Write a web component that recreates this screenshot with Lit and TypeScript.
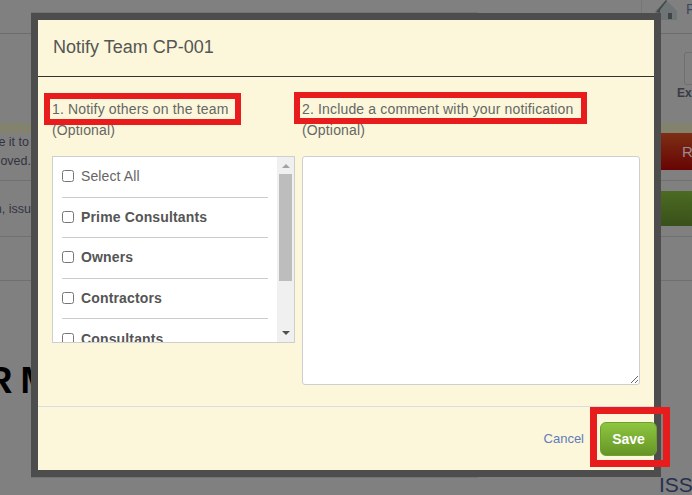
import { LitElement, html, css } from "lit";
import { customElement } from "lit/decorators.js";

const groups = [
  { name: "Select All", bold: false },
  { name: "Prime Consultants", bold: true },
  { name: "Owners", bold: true },
  { name: "Contractors", bold: true },
  { name: "Consultants", bold: true },
];

@customElement("app-root")
export class AppRoot extends LitElement {
  static styles = css`
    :host { display: block; width: 692px; height: 495px; font-family: "Liberation Sans", Arial, sans-serif; }
    * { box-sizing: border-box; }
    .page { position: relative; width: 692px; height: 495px; overflow: hidden; background: #808080; color: #3a3a44; display: flex; flex-direction: column; }

    /* dimmed page behind the dialog */
    .bar { height: 34px; flex: none; border-bottom: 1px solid #6c6c6c; display: flex; justify-content: flex-end; }
    .home { width: 51px; border-left: 1px solid #767676; display: flex; gap: 9px; padding: 0 0 0 13px; font-size: 14px; color: #3c4660; line-height: 18px; }
    .home svg { flex: none; }
    .tools { height: 89px; flex: none; display: flex; justify-content: flex-end; padding-top: 18px; gap: 19px; }
    .tool { display: flex; flex-direction: column; align-items: flex-start; gap: 2px; font-size: 12px; font-weight: bold; line-height: 13px; width: 15px; }
    .tool-l { width: 10px; }
    .tool i { display: block; width: 30px; height: 33px; border: 1px solid #6f6f6f; border-radius: 3px; flex: none; }
    .tool-l i { margin-left: -27px; }
    .tool-r { margin-right: -7px; width: 15px; }
    .tool span { white-space: nowrap; }
    .tool-r span { margin-left: -7px; }
    .row { flex: none; border-bottom: 1px solid #6f6f6f; display: flex; justify-content: space-between; }
    .note { height: 58px; background: linear-gradient(#83836d 0 10px, #808080 10px); font-size: 12.5px; line-height: 19px; color: #33333f; }
    .note p { margin: 10px 0 0; width: 31px; overflow: hidden; display: flex; flex-direction: column; align-items: flex-end; white-space: nowrap; }
    .note p span:first-child { margin-right: 2px; }
    .red { width: 31px; height: 37px; margin-top: 10px; background: linear-gradient(#7c2f14, #680404); color: #9a8a96; font-size: 15px; line-height: 37px; padding-left: 21px; overflow: hidden; }
    .issue { height: 56px; font-size: 12.5px; line-height: 16px; color: #33333f; }
    .issue span { display: flex; justify-content: flex-end; width: 31px; overflow: hidden; white-space: nowrap; margin-top: 20px; height: 16px; }
    .green { width: 31px; height: 35px; margin-top: 10px; background: linear-gradient(#4c6b22, #39501a); }
    .plain { height: 44px; }
    .title { flex: 1; display: flex; justify-content: space-between; }
    .title b { font-size: 36px; line-height: 40px; word-spacing: -2px; color: #000; margin: 80px 0 0 -13.5px; white-space: nowrap; height: 40px; }
    .title span { font-size: 21px; line-height: 22px; color: #27304f; margin-top: 193px; width: 33px; white-space: nowrap; overflow: hidden; }
    .edge { position: absolute; left: 31px; top: 12px; width: 447px; height: 466px; background: #737373; }

    /* dialog */
    .modal { position: absolute; left: 31px; top: 13px; width: 630px; height: 464px; border: 7px solid #4d4d4d; background: #fcf7da; display: flex; flex-direction: column; }
    .head { height: 57px; flex: none; border-bottom: 1px solid #333; padding: 16px 15px 0; font-size: 18px; line-height: 22px; color: #555; }
    .body { flex: 1; display: grid; grid-template-columns: 243px 338px; column-gap: 7px; padding: 20px 0 0 14px; align-content: start; }
    .label { font-size: 14px; line-height: 21px; letter-spacing: .16px; color: #666; height: 59px; padding: 2px 0 0; white-space: nowrap; }
    .list { height: 187px; border: 1px solid #ccced0; background: #fff; display: flex; overflow: hidden; }
    .items { flex: 1; min-width: 0; padding: 0 9px; overflow: hidden; }
    .item { height: 40.6px; width: 206px; flex: none; border-bottom: 1px solid #ccc; display: flex; align-items: center; gap: 6px; font-size: 14px; letter-spacing: .1px; color: #666; }
    .item:first-child { padding-bottom: 2px; }
    .item:last-child { border-bottom: 0; }
    .item.bold { font-weight: bold; color: #555; letter-spacing: .15px; padding-bottom: 1px; }
    .item input { width: 12px; height: 12px; margin: 0 1px 0 0; flex: none; }
    .sb { width: 17px; flex: none; background: #f0f0f0; display: flex; flex-direction: column; align-items: center; padding: 7px 0 7px; }
    .sb .th { width: 13px; height: 107px; background: #bdbdbd; margin-top: 6px; flex: none; }
    .sb .up { width: 0; height: 0; border: 4px solid transparent; border-top: 0; border-bottom: 4px solid #a3a3a3; flex: none; }
    .sb .dn { width: 0; height: 0; border: 4px solid transparent; border-bottom: 0; border-top: 4px solid #505050; margin-top: auto; flex: none; }
    textarea { display: block; width: 338px; height: 229px; border: 1px solid #ccced0; border-radius: 3px; background: #fff; margin: 0; padding: 0; resize: both; outline: none; }
    .foot { height: 64px; flex: none; border-top: 1px solid #d8dde0; display: flex; justify-content: flex-end; gap: 16px; padding: 15px 0 0; align-items: flex-start; }
    .cancel { font-size: 13px; line-height: 34px; color: #5f7cbc; }
    .save { width: 57px; height: 34px; margin-right: -3px; position: relative; border: 1px solid #6fa02c; border-radius: 6px; background: linear-gradient(#8dc63f, #669527); color: #fff; font: bold 14px/32px "Liberation Sans", Arial, sans-serif; text-align: center; padding: 0; }

    /* red annotations */
    .mark { position: absolute; border: 6px solid #e81c1c; pointer-events: none; }
    .m1 { left: 44px; top: 93px; width: 197px; height: 32px; }
    .m2 { left: 294px; top: 92px; width: 293px; height: 32px; }
    .m3 { left: 590px; top: 407px; width: 80px; height: 60px; border-width: 7px; }
  `;

  render() {
    return html`
      <div class="page">
        <div class="bar">
          <div class="home">
            <svg width="22" height="21" viewBox="0 0 22 21"><path d="M0 11 11 0l11 11v9H2z" fill="#6f7476"/><path d="M1 12 11 0l1 1-7 9v3z" fill="#454849"/><rect x="13" y="13" width="4" height="6" fill="#3f4444"/></svg>
            <span>P</span>
          </div>
        </div>
        <div class="tools">
          <div class="tool tool-l"><i></i></div>
          <div class="tool tool-r"><i></i><span>Exp</span></div>
        </div>
        <div class="row note">
          <p><span>e it to</span><span>oved.</span></p>
          <div class="red">R</div>
        </div>
        <div class="row issue">
          <span>n, issu</span>
          <div class="green"></div>
        </div>
        <div class="row plain"></div>
        <div class="title"><b>R M</b><span>ISS</span></div>
        <div class="edge"></div>

        <div class="modal">
          <div class="head">Notify Team CP-001</div>
          <div class="body">
            <div class="label">1. Notify others on the team<br />(Optional)</div>
            <div class="label">2. Include a comment with your notification<br />(Optional)</div>
            <div class="list">
              <div class="items">
                ${groups.map(
                  (g) => html`<label class="item ${g.bold ? "bold" : ""}"><input type="checkbox" />${g.name}</label>`
                )}
              </div>
              <div class="sb"><div class="up"></div><div class="th"></div><div class="dn"></div></div>
            </div>
            <textarea></textarea>
          </div>
          <div class="foot">
            <span class="cancel">Cancel</span>
            <button class="save">Save</button>
          </div>
        </div>

        <div class="mark m1"></div>
        <div class="mark m2"></div>
        <div class="mark m3"></div>
      </div>
    `;
  }
}
